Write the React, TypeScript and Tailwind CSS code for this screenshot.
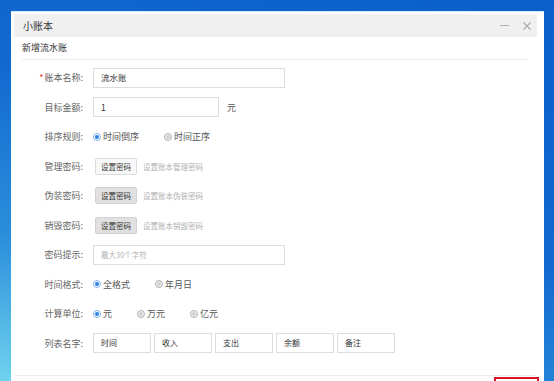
import React from 'react';

const font = { fontFamily: '"Noto Sans CJK SC", "Liberation Sans", sans-serif' };

function Radio({ checked, label }: { checked?: boolean; label: string }) {
  return (
    <span className="mr-[25px] flex items-center">
      <span
        className={`flex h-[8px] w-[8px] items-center justify-center rounded-full border ${
          checked ? 'border-[#7fb2ec] bg-white' : 'border-[#b0b0b0] bg-[#f4f4f4]'
        }`}
      >
        <span className={`h-[4px] w-[4px] rounded-full ${checked ? 'bg-[#2f7fe0]' : 'bg-[#d0d0d0]'}`} />
      </span>
      <span className="ml-[2px] text-[9px] text-[#555]">{label}</span>
    </span>
  );
}

function Row({ label, required, children }: { label: string; required?: boolean; children?: React.ReactNode }) {
  return (
    <div className="flex h-[29.5px] items-center">
      <div className="w-[61px] text-right text-[9px] text-[#666]">
        {required && <span className="mr-[1px] text-[#e33]">*</span>}
        {label}
      </div>
      <div className="ml-[10px] flex items-center">{children}</div>
    </div>
  );
}

function PwdButton({ grey, hint }: { grey?: boolean; hint: string }) {
  return (
    <>
      <span
        className={`ml-[2px] flex h-[17px] w-[42px] items-center justify-center rounded-[2px] border text-[7.5px] text-[#333] ${
          grey ? 'border-[#d2d2d2] bg-[#e0e0e0]' : 'border-[#dcdcdc] bg-[#f8f8f8]'
        }`}
      >
        设置密码
      </span>
      <span className="ml-[6px] text-[7.5px] text-[#b0b0b0]">{hint}</span>
    </>
  );
}

export default function App() {
  const cols = ['时间', '收入', '支出', '余额', '备注'];
  return (
    <div
      className="h-[381px] w-[554px] overflow-hidden bg-[linear-gradient(200deg,#0a5fc9_0%,#1169cf_45%,#2b8fdc_75%,#6fd3ee_100%)] pl-[11px] pt-[11px]"
      style={font}
    >
      <div className="h-[400px] w-[533px] border-t border-[#cfe9f7] bg-white pl-[3px] pr-[7px] pt-[2px]">
        {/* title bar */}
        <div className="flex h-[23px] items-center bg-[#f0f0f0] pl-[9px] pr-[6px]">
          <span className="text-[10px] text-[#333]">小账本</span>
          <span className="ml-auto flex items-center gap-[14px]">
            <span className="h-[1px] w-[9px] bg-[#b0b0b0]" />
            <svg width="8" height="8" viewBox="0 0 8 8" stroke="#aaa" strokeWidth="1.1">
              <path d="M0.5 0.5L7.5 7.5M7.5 0.5L0.5 7.5" />
            </svg>
          </span>
        </div>

        {/* body */}
        <div className="pl-[8px] pr-[9px]">
          <div className="flex h-[23px] items-center border-b border-[#eee] text-[9px] text-[#333]">新增流水账</div>

          <div className="pt-[3px]">
            <Row label="账本名称:" required>
              <div className="flex h-[20px] w-[192px] items-center border border-[#ddd] pl-[7px] text-[8.5px] text-[#333]">
                流水账
              </div>
            </Row>
            <Row label="目标金额:">
              <div className="flex h-[20px] w-[126px] items-center border border-[#ddd] pl-[7px] text-[8.5px] text-[#333]">
                1
              </div>
              <span className="ml-[8px] text-[9px] text-[#555]">元</span>
            </Row>
            <Row label="排序规则:">
              <Radio checked label="时间倒序" />
              <Radio label="时间正序" />
            </Row>
            <Row label="管理密码:">
              <PwdButton hint="设置账本管理密码" />
            </Row>
            <Row label="伪装密码:">
              <PwdButton grey hint="设置账本伪装密码" />
            </Row>
            <Row label="销毁密码:">
              <PwdButton grey hint="设置账本销毁密码" />
            </Row>
            <Row label="密码提示:">
              <div className="flex h-[20px] w-[192px] items-center border border-[#ddd] pl-[7px] text-[7.5px] text-[#b5b5b5]">
                最大30个字符
              </div>
            </Row>
            <Row label="时间格式:">
              <Radio checked label="全格式" />
              <Radio label="年月日" />
            </Row>
            <Row label="计算单位:">
              <Radio checked label="元" />
              <Radio label="万元" />
              <Radio label="亿元" />
            </Row>
            <Row label="列表名字:">
              <div className="flex gap-[3px]">
                {cols.map((c) => (
                  <div
                    key={c}
                    className="flex h-[20px] w-[58px] items-center border border-[#ddd] pl-[7px] text-[8px] text-[#333]"
                  >
                    {c}
                  </div>
                ))}
              </div>
            </Row>
          </div>
        </div>

        {/* footer */}
        <div className="mt-[17px] flex justify-end border-t border-[#eee]">
          <div className="-mr-[2px] mt-[1px] h-[20px] w-[45px] border-2 border-[#d9142a]" />
        </div>
      </div>
    </div>
  );
}
